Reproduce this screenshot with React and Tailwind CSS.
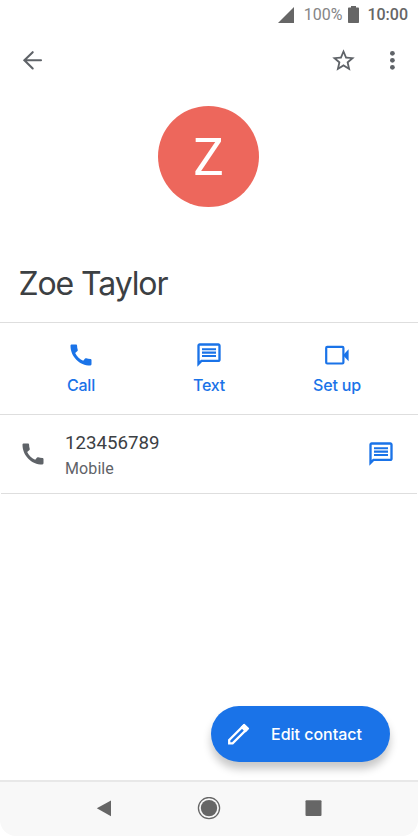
const PhoneIcon = () => (
  <svg viewBox="0 0 24 24" className="size-7 shrink-0" fill="currentColor">
    <path d="M20.01 15.38c-1.23 0-2.42-.2-3.53-.56a.98.98 0 0 0-1.01.24l-1.57 1.97c-2.83-1.35-5.48-3.9-6.89-6.83l1.95-1.66c.27-.28.35-.67.24-1.02-.37-1.11-.56-2.3-.56-3.53 0-.54-.45-.99-.99-.99H4.19C3.65 3 3 3.24 3 3.99 3 13.28 10.73 21 20.01 21c.71 0 .99-.63.99-1.18v-3.45c0-.54-.45-.99-.99-.99z" />
  </svg>
)

const MessageIcon = () => (
  <svg viewBox="0 0 24 24" className="size-7 shrink-0" fill="currentColor">
    <path d="M4 4h16v12H5.17L4 17.17V4m0-2c-1.1 0-1.99.9-1.99 2L2 22l4-4h14c1.1 0 2-.9 2-2V4c0-1.1-.9-2-2-2H4zm2 10h12v1.8H6V12zm0-2.9h12v1.8H6V9.1zM6 6.2h12V8H6V6.2z" />
  </svg>
)

const VideoIcon = () => (
  <svg viewBox="0 0 28 28" className="size-7 shrink-0" fill="currentColor">
    <rect x="3.2" y="5.9" width="17.2" height="16.6" rx="1" fill="none" stroke="currentColor" strokeWidth="2.2" />
    <path d="M20 14.2 25.6 8.2v12z" />
  </svg>
)

const actions = [
  { label: 'Call', Icon: PhoneIcon },
  { label: 'Text', Icon: MessageIcon },
  { label: 'Set up', Icon: VideoIcon }
]

function StatusBar() {
  return (
    <div className="flex h-[30px] items-center justify-end pr-[10px] text-base leading-none text-[#666]">
      <svg viewBox="0 0 16 16" className="size-4" fill="currentColor">
        <path d="M16 0v16H0z" />
      </svg>
      <span className="ml-[10px] text-[#858585]">100%</span>
      <svg viewBox="0 0 11 17" className="-mt-0.5 ml-[6px] h-[17px] w-[11px]" fill="currentColor">
        <path d="M3 0h5v1.6h2.2q.8 0 .8.8v13.8q0 .8-.8.8H.8q-.8 0-.8-.8V2.4q0-.8.8-.8H3z" />
      </svg>
      <span className="ml-2 font-medium">10:00</span>
    </div>
  )
}

function Toolbar() {
  return (
    <header className="flex h-[60px] items-center justify-between pr-3 pl-[18px] text-[#5f6368]">
      <button type="button" aria-label="Back">
        <svg viewBox="0 0 28 28" className="size-7" fill="none" stroke="currentColor" strokeWidth="2.1" strokeLinecap="round">
          <path d="M23 14.3H6.5M14.7 6.2 6.4 14.3l8.3 8.1" />
        </svg>
      </button>
      <div className="flex items-center gap-[21px]">
        <button type="button" aria-label="Favorite">
          <svg viewBox="0 0 24 24" className="size-[27px]" fill="currentColor">
            <path d="M22 9.24l-7.19-.62L12 2 9.19 8.63 2 9.24l5.46 4.73L5.82 21 12 17.27 18.18 21l-1.63-7.03L22 9.24zM12 15.4l-3.76 2.27 1-4.28-3.32-2.88 4.38-.38L12 6.1l1.71 4.04 4.38.38-3.32 2.88 1 4.28L12 15.4z" />
          </svg>
        </button>
        <button type="button" aria-label="More">
          <svg viewBox="0 0 28 28" className="size-7" fill="currentColor">
            <circle cx="14.4" cy="7.3" r="2.4" />
            <circle cx="14.4" cy="14.3" r="2.4" />
            <circle cx="14.4" cy="21.3" r="2.4" />
          </svg>
        </button>
      </div>
    </header>
  )
}

function NavBar() {
  return (
    <nav className="flex h-14 items-center justify-center gap-[81px] rounded-b-2xl border-t-2 border-[#e8e8e8] bg-[#f8f8f8] text-[#666]">
      <svg viewBox="0 0 24 24" className="size-6" fill="currentColor">
        <path d="M4.8 11.3 19 3.4v15.8z" />
      </svg>
      <svg viewBox="0 0 24 24" className="size-6">
        <circle cx="12" cy="11.1" r="10.6" fill="none" stroke="currentColor" strokeWidth="1.3" />
        <circle cx="12" cy="11.1" r="8.2" fill="currentColor" />
      </svg>
      <svg viewBox="0 0 24 24" className="size-6" fill="currentColor">
        <rect x="3.5" y="3.3" width="16" height="15.7" rx="1" />
      </svg>
    </nav>
  )
}

export default function App() {
  return (
    <div className="flex h-[836px] w-[418px] flex-col overflow-hidden bg-white font-['Roboto',sans-serif]">
      <StatusBar />
      <Toolbar />

      <div className="flex h-[148px] justify-center pt-4 pr-px">
        <div className="flex size-[101px] items-center justify-center rounded-full bg-[#ed675c] pt-[2px] text-[51px] leading-none text-white">
          Z
        </div>
      </div>

      <h1 className="h-[85px] border-b border-[#dedede] pt-6 pl-[18.5px] font-['Inter',sans-serif] text-[32px] leading-[44px] tracking-[-1.1px] text-[#3c4043]">
        Zoe Taylor
      </h1>

      <div className="flex h-[92px] justify-center border-b border-[#dedede] pt-[18px] text-[#1a73e8]">
        {actions.map(({ label, Icon }) => (
          <button key={label} type="button" className="flex w-32 flex-col items-center">
            <Icon />
            <span className="mt-1 font-['Inter',sans-serif] text-base leading-6 font-medium tracking-[-0.2px]">{label}</span>
          </button>
        ))}
      </div>

      <div className="mx-px flex h-[79px] items-center border-b border-[#dedede] pr-[22px] pl-[17.5px] text-[#5f6368]">
        <PhoneIcon />
        <div className="ml-[18.5px] flex-1 pt-[3px]">
          <p className="text-[18.7px] leading-6 text-[#3c4043]">123456789</p>
          <p className="mt-0.5 text-base leading-6 tracking-[0.1px]">Mobile</p>
        </div>
        <button type="button" aria-label="Text" className="text-[#1a73e8]">
          <MessageIcon />
        </button>
      </div>

      <main className="flex flex-1 items-end justify-end pr-7 pb-[18px]">
        <button
          type="button"
          className="flex h-14 w-[179px] items-center rounded-full bg-[#1a73e8] pl-[14px] text-white shadow-[0_7px_8px_rgba(0,0,0,0.22)]"
        >
          <svg viewBox="0 0 28 28" className="size-7" fill="none" stroke="currentColor" strokeWidth="2.3">
            <path d="M4.2 20 18.6 5.6l3.4 3.4L7.6 23.4H4.2z" />
            <path d="m19.2 4.4 4.2 4.2-2.8 2.8-4.2-4.2z" fill="currentColor" strokeWidth="1.4" strokeLinejoin="round" />
          </svg>
          <span className="ml-[18px] font-['Inter',sans-serif] text-base font-medium tracking-[-0.02px]">Edit contact</span>
        </button>
      </main>

      <NavBar />
    </div>
  )
}
